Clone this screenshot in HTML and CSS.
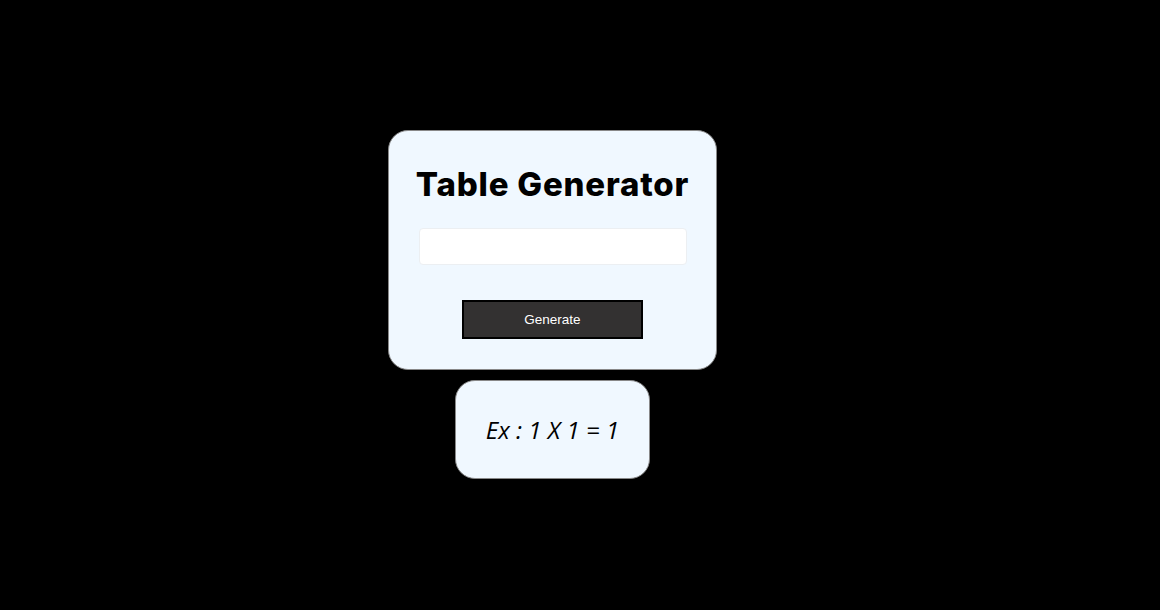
FILE: index.html
```html
<!DOCTYPE html>
<html lang="en">
<head>
<meta charset="utf-8">
<title>Table Generator</title>
<link rel="stylesheet" href="styles.css">
</head>
<body>
<main class="page">
  <section class="card">
    <h1 class="title">Table Generator</h1>
    <input class="field" type="text">
    <button class="btn" type="button">Generate</button>
  </section>
  <section class="result">
    <p class="example">Ex : 1 X 1 = 1</p>
  </section>
</main>
</body>
</html>
```
FILE: styles.css
```css
html, body {
  margin: 0;
  padding: 0;
  background: #000;
  height: 100%;
}
.page {
  height: 610px;
  box-sizing: border-box;
  padding: 130px 55px 0 0;
  display: flex;
  flex-direction: column;
  align-items: center;
  gap: 10px;
}
.card {
  width: 329px;
  height: 240px;
  box-sizing: border-box;
  background: #f0f8ff;
  border-radius: 20px;
  border: 1px solid #888;
  display: flex;
  flex-direction: column;
  align-items: center;
  padding-top: 33px;
}
.title {
  margin: 0;
  font-family: Inter, "Noto Sans", sans-serif;
  font-weight: 800;
  font-size: 33px;
  line-height: 40px;
  color: #000;
  letter-spacing: 0.8px;
}
.field {
  margin-top: 24px;
  width: 268px;
  height: 37px;
  box-sizing: border-box;
  background: #fff;
  border: 1px solid #eceff2;
  border-radius: 4px;
  outline: none;
}
.btn {
  margin-top: 35px;
  width: 181px;
  height: 39px;
  box-sizing: border-box;
  background: #333131;
  border: 2px solid #000;
  color: #fff;
  font-family: "Liberation Sans", Arial, sans-serif;
  font-size: 13.5px;
  padding: 0;
}
.result {
  width: 195px;
  height: 99px;
  box-sizing: border-box;
  background: #f0f8ff;
  border-radius: 20px;
  border: 1px solid #888;
  display: flex;
  align-items: center;
  justify-content: center;
}
.example {
  margin: 0;
  font-family: "Open Sans", sans-serif;
  font-style: italic;
  font-weight: 400;
  font-size: 24px;
  color: #000;
  padding-bottom: 1px;
}
```
